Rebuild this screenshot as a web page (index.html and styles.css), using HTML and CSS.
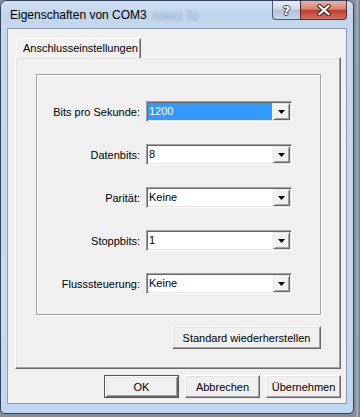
FILE: index.html
```html
<!DOCTYPE html>
<html lang="de">
<head>
  <meta charset="UTF-8" />
  <meta name="viewport" content="width=device-width, initial-scale=1.0"/>
  <title>Eigenschaften von COM3</title>
  <link rel="stylesheet" href="styles.css">
</head>
<body>
  <div class="window">
    <div class="titlebar">
      <span class="title">Eigenschaften von COM3</span>
      <span class="behind">nnect To</span>
      <div class="caption">
        <div class="cap-btn help">?</div>
        <div class="cap-btn close">
          <svg width="14" height="12" viewBox="0 0 14 12">
            <path d="M2.5 2 L11.5 10 M11.5 2 L2.5 10" stroke="#3a1c1a" stroke-width="4.2" stroke-linecap="square"/>
            <path d="M2.5 2 L11.5 10 M11.5 2 L2.5 10" stroke="#fff" stroke-width="2.2" stroke-linecap="square"/>
          </svg>
        </div>
      </div>
    </div>
    <div class="frame">
      <div class="client">
        <div class="tabs">
          <div class="tab active">Anschlusseinstellungen</div>
        </div>
        <div class="tab-panel">
          <div class="group">
            <div class="settings">
              <label>Bits pro Sekunde:</label>
              <div class="combo">
                <span class="value selected">1200</span>
                <span class="drop"><svg width="7" height="4" viewBox="0 0 7 4"><path d="M0 0 H7 L3.5 4 Z" fill="#000"/></svg></span>
              </div>
              <label>Datenbits:</label>
              <div class="combo">
                <span class="value">8</span>
                <span class="drop"><svg width="7" height="4" viewBox="0 0 7 4"><path d="M0 0 H7 L3.5 4 Z" fill="#000"/></svg></span>
              </div>
              <label>Parität:</label>
              <div class="combo">
                <span class="value">Keine</span>
                <span class="drop"><svg width="7" height="4" viewBox="0 0 7 4"><path d="M0 0 H7 L3.5 4 Z" fill="#000"/></svg></span>
              </div>
              <label>Stoppbits:</label>
              <div class="combo">
                <span class="value">1</span>
                <span class="drop"><svg width="7" height="4" viewBox="0 0 7 4"><path d="M0 0 H7 L3.5 4 Z" fill="#000"/></svg></span>
              </div>
              <label>Flusssteuerung:</label>
              <div class="combo">
                <span class="value">Keine</span>
                <span class="drop"><svg width="7" height="4" viewBox="0 0 7 4"><path d="M0 0 H7 L3.5 4 Z" fill="#000"/></svg></span>
              </div>
            </div>
          </div>
          <div class="panel-actions">
            <button class="btn wide">Standard wiederherstellen</button>
          </div>
        </div>
        <div class="dialog-actions">
          <button class="btn default">OK</button>
          <button class="btn">Abbrechen</button>
          <button class="btn">Übernehmen</button>
        </div>
      </div>
    </div>
  </div>
</body>
</html>
```

FILE: styles.css
```css
* {
  box-sizing: border-box;
}
body {
  margin: 0;
  width: 360px;
  height: 417px;
  overflow: hidden;
  background: linear-gradient(to right, #858d97 0, #858d97 356px, #a9bdd2 357px, #7b8590 359px);
  font-family: "Liberation Sans", Arial, sans-serif;
  font-size: 11px;
  color: #000;
}
.window {
  width: 354px;
  height: 414px;
  border: 1px solid #34435a;
  border-radius: 7px 7px 5px 5px;
  background: linear-gradient(to bottom, #c4d8ef, #c6daf1 80%, #bfd7f3);
  display: flex;
  flex-direction: column;
}
.titlebar {
  height: 27px;
  display: flex;
  align-items: flex-start;
  border-radius: 6px 6px 0 0;
  background: linear-gradient(to bottom, #cfe0f3, #bfd4ec 55%, #c5d9f0);
}
.title {
  font-size: 12px;
  line-height: 16px;
  margin: 6px 0 0 9px;
}
.behind {
  flex: 1;
  font-size: 12px;
  line-height: 16px;
  margin: 7px 0 0 6px;
  color: rgba(80, 92, 110, 0.35);
  filter: blur(1.4px);
}
.caption {
  display: flex;
  margin-right: 6px;
}
.cap-btn {
  height: 19px;
  border: 1px solid #4b5a70;
  border-top: none;
  display: flex;
  align-items: center;
  justify-content: center;
}
.help {
  width: 28px;
  border-right: none;
  border-radius: 0 0 0 4px;
  background: linear-gradient(to bottom, #e6eef7, #cdd9e8 45%, #b2c3d8 50%, #c6d5e6);
  font-family: "DejaVu Sans", sans-serif;
  font-weight: bold;
  font-size: 13px;
  color: #fff;
  text-shadow: 1px 0 0 #3a4658, -1px 0 0 #3a4658, 0 1px 0 #3a4658, 0 -1px 0 #3a4658;
}
.close {
  width: 47px;
  border-color: #5b2c28;
  border-radius: 0 0 4px 0;
  background: linear-gradient(to bottom, #e9b3a7, #d98372 45%, #c23d2e 52%, #d0705e);
}
.frame {
  flex: 1;
  display: flex;
  padding: 0 6px 9px 6px;
}
.client {
  flex: 1;
  border: 1px solid #8e9cae;
  background: #f0f0f0;
  padding: 9px 5px 0 7px;
  display: flex;
  flex-direction: column;
}
.tabs {
  display: flex;
  height: 19px;
  padding-left: 1px;
}
.tab {
  position: relative;
  z-index: 1;
  width: 125px;
  height: 20px;
  padding-left: 6px;
  line-height: 19px;
  background: #f0f0f0;
  border-top: 1px solid #fff;
  border-left: 1px solid #fff;
  border-right: 1px solid #696969;
  box-shadow: inset -1px 0 0 #a0a0a0;
}
.tab-panel {
  height: 312px;
  padding: 16px 19px 0 20px;
  border: 1px solid;
  border-color: #fff #696969 #696969 #fff;
  box-shadow: inset -1px -1px 0 #a0a0a0, inset 1px 1px 0 #e3e3e3;
}
.group {
  height: 241px;
  border: 1px solid #a0a0a0;
  box-shadow: inset 1px 1px 0 #fff, 1px 1px 0 #fff;
}
.settings {
  display: grid;
  grid-template-columns: 103px 146px;
  grid-auto-rows: 21px;
  column-gap: 6px;
  row-gap: 22px;
  padding-top: 26px;
}
.settings label {
  align-self: center;
  text-align: right;
  white-space: nowrap;
}
.combo {
  display: flex;
  padding: 1px;
  background: #fff;
  border: 1px solid;
  border-color: #a0a0a0 #fff #fff #a0a0a0;
  box-shadow: inset 1px 1px 0 #696969, inset -1px -1px 0 #e3e3e3;
}
.value {
  flex: 1;
  margin-right: 1px;
  padding-left: 1px;
  line-height: 17px;
}
.value.selected {
  background: #3399ff;
  color: #fff;
}
.drop {
  width: 17px;
  height: 17px;
  display: flex;
  align-items: center;
  justify-content: center;
  padding-top: 1px;
  background: #f0f0f0;
  border: 1px solid;
  border-color: #e3e3e3 #696969 #696969 #e3e3e3;
  box-shadow: inset 1px 1px 0 #fff, inset -1px -1px 0 #a0a0a0;
}
.panel-actions {
  display: flex;
  justify-content: flex-end;
  margin-top: 11px;
}
.btn {
  height: 23px;
  width: 75px;
  padding: 0;
  font-family: "Liberation Sans", Arial, sans-serif;
  font-size: 11px;
  color: #000;
  background: #f0f0f0;
  border: 1px solid;
  border-color: #fff #696969 #696969 #fff;
  box-shadow: inset -1px -1px 0 #a0a0a0, inset 1px 1px 0 #e3e3e3;
}
.btn.wide {
  width: 149px;
}
.btn.default {
  border-color: #555;
  box-shadow: inset 1px 1px 0 #fff, inset -1px -1px 0 #696969, inset 2px 2px 0 #e3e3e3, inset -2px -2px 0 #a0a0a0;
}
.dialog-actions {
  display: flex;
  justify-content: flex-end;
  gap: 6px;
  margin-top: 6px;
}
```
